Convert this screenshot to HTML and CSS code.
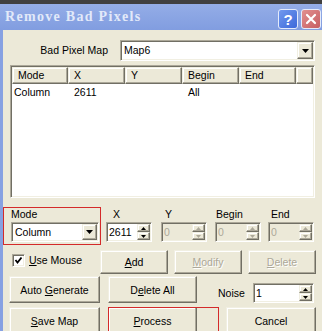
FILE: index.html
```html
<!DOCTYPE html>
<html lang="en">
<head>
    <meta charset="UTF-8">
    <title>Remove Bad Pixels</title>
    <link rel="stylesheet" href="styles.css">
</head>
<body>
    <div class="top-edge"></div>
    <div class="titlebar">
        <span class="title">Remove Bad Pixels</span>
        <div class="caption-btns">
            <span class="cap-btn cap-help">?</span>
            <span class="cap-btn cap-close">
                <svg width="12" height="12" viewBox="0 0 12 12"><path d="M2 2 L10 10 M10 2 L2 10" stroke="#fff" stroke-width="2.2" stroke-linecap="round"/></svg>
            </span>
        </div>
    </div>

    <div class="window">
        <div class="map-row">
            <span class="map-label">Bad Pixel Map</span>
            <div class="combo map-combo">
                <span class="combo-text">Map6</span>
                <span class="drop"><svg width="7" height="4" viewBox="0 0 7 4"><polygon points="0,0 7,0 3.5,4" fill="#000"/></svg></span>
            </div>
        </div>

        <div class="listview">
            <div class="lv-header">
                <span class="lv-col col-mode">Mode</span>
                <span class="lv-col col-x">X</span>
                <span class="lv-col col-y">Y</span>
                <span class="lv-col col-begin">Begin</span>
                <span class="lv-col col-end">End</span>
                <span class="lv-col col-rest"></span>
            </div>
            <div class="lv-row">
                <span class="lv-cell col-mode first">Column</span>
                <span class="lv-cell col-x">2611</span>
                <span class="lv-cell col-y"></span>
                <span class="lv-cell col-begin">All</span>
                <span class="lv-cell col-end"></span>
            </div>
        </div>

        <div class="fields">
            <div class="field field-mode">
                <span class="field-label">Mode</span>
                <div class="combo mode-combo">
                    <span class="combo-text">Column</span>
                    <span class="drop"><svg width="7" height="4" viewBox="0 0 7 4"><polygon points="0,0 7,0 3.5,4" fill="#000"/></svg></span>
                </div>
            </div>
            <div class="field field-x">
                <span class="field-label">X</span>
                <div class="spin">
                    <span class="spin-text">2611</span>
                    <span class="spin-btns">
                        <span class="spin-btn"><svg width="5" height="3" viewBox="0 0 5 3"><polygon points="0,3 5,3 2.5,0" fill="#000"/></svg></span>
                        <span class="spin-btn"><svg width="5" height="3" viewBox="0 0 5 3"><polygon points="0,0 5,0 2.5,3" fill="#000"/></svg></span>
                    </span>
                </div>
            </div>
            <div class="field field-y">
                <span class="field-label">Y</span>
                <div class="spin disabled">
                    <span class="spin-text">0</span>
                    <span class="spin-btns">
                        <span class="spin-btn"><svg width="5" height="3" viewBox="0 0 5 3"><polygon points="0,3 5,3 2.5,0" fill="#aca899"/></svg></span>
                        <span class="spin-btn"><svg width="5" height="3" viewBox="0 0 5 3"><polygon points="0,0 5,0 2.5,3" fill="#aca899"/></svg></span>
                    </span>
                </div>
            </div>
            <div class="field field-begin">
                <span class="field-label">Begin</span>
                <div class="spin disabled">
                    <span class="spin-text">0</span>
                    <span class="spin-btns">
                        <span class="spin-btn"><svg width="5" height="3" viewBox="0 0 5 3"><polygon points="0,3 5,3 2.5,0" fill="#aca899"/></svg></span>
                        <span class="spin-btn"><svg width="5" height="3" viewBox="0 0 5 3"><polygon points="0,0 5,0 2.5,3" fill="#aca899"/></svg></span>
                    </span>
                </div>
            </div>
            <div class="field field-end">
                <span class="field-label">End</span>
                <div class="spin disabled">
                    <span class="spin-text">0</span>
                    <span class="spin-btns">
                        <span class="spin-btn"><svg width="5" height="3" viewBox="0 0 5 3"><polygon points="0,3 5,3 2.5,0" fill="#aca899"/></svg></span>
                        <span class="spin-btn"><svg width="5" height="3" viewBox="0 0 5 3"><polygon points="0,0 5,0 2.5,3" fill="#aca899"/></svg></span>
                    </span>
                </div>
            </div>
        </div>

        <div class="btn-row row-edit">
            <label class="check">
                <span class="check-box"><svg width="9" height="9" viewBox="0 0 9 9"><polyline points="1.5,4 3.5,6.5 7.5,1.5" fill="none" stroke="#000" stroke-width="1.8"/></svg></span>
                <span><u>U</u>se Mouse</span>
            </label>
            <button class="btn btn-add"><u>A</u>dd</button>
            <button class="btn btn-modify" disabled><u>M</u>odify</button>
            <button class="btn btn-delete" disabled><u>D</u>elete</button>
        </div>

        <div class="btn-row row-gen">
            <button class="btn btn-left">Auto <u>G</u>enerate</button>
            <button class="btn btn-mid">D<u>e</u>lete All</button>
            <span class="noise-label">Noise</span>
            <div class="spin noise-spin">
                <span class="spin-text">1</span>
                <span class="spin-btns">
                    <span class="spin-btn"><svg width="5" height="3" viewBox="0 0 5 3"><polygon points="0,3 5,3 2.5,0" fill="#000"/></svg></span>
                    <span class="spin-btn"><svg width="5" height="3" viewBox="0 0 5 3"><polygon points="0,0 5,0 2.5,3" fill="#000"/></svg></span>
                </span>
            </div>
        </div>

        <div class="btn-row row-main">
            <button class="btn btn-left"><u>S</u>ave Map</button>
            <div class="marked">
                <button class="btn btn-process"><u>P</u>rocess</button>
            </div>
            <button class="btn btn-cancel">Cancel</button>
        </div>
    </div>
</body>
</html>
```

FILE: styles.css
```css
body {
    margin: 0;
    width: 322px;
    height: 331px;
    overflow: hidden;
    background-color: #ece9d8;
    font-family: "Liberation Sans", Arial, sans-serif;
    font-size: 10.5px;
    color: #000;
}
.top-edge {
    height: 4px;
    background-color: #404040;
}
.titlebar {
    height: 26px;
    display: flex;
    justify-content: space-between;
    align-items: flex-start;
    background: linear-gradient(#94ade7, #819de0);
}
.title {
    font-family: "Liberation Serif", serif;
    font-weight: bold;
    font-size: 14px;
    letter-spacing: 1.3px;
    color: #e2e9f9;
    line-height: 26px;
    padding-left: 5px;
}
.caption-btns {
    display: flex;
    gap: 3px;
    padding: 5px 1px 0 0;
}
.cap-btn {
    width: 20px;
    height: 20px;
    box-sizing: border-box;
    border: 1px solid #e4ebfb;
    border-radius: 3px;
    display: flex;
    align-items: center;
    justify-content: center;
}
.cap-help {
    background: linear-gradient(135deg, #7199ee, #3d69da);
    color: #fff;
    font-weight: bold;
    font-size: 15px;
}
.cap-close {
    background: linear-gradient(135deg, #e29090, #c65e62);
}
.window {
    border-left: 3px solid #87a1e2;
    height: 301px;
    padding-top: 10px;
    box-sizing: border-box;
}

/* sunken / raised 3d borders */
.combo, .spin, .listview, .check-box {
    border: 1px solid;
    border-color: #aca899 #fff #fff #aca899;
    box-shadow: inset 1px 1px #716f64, inset -1px -1px #f1efe2;
    box-sizing: border-box;
    padding: 1px;
    background-color: #fff;
}
.drop, .spin-btn, .lv-col, .btn {
    border: 1px solid;
    border-color: #f1efe2 #716f64 #716f64 #f1efe2;
    box-shadow: inset -1px -1px #aca899, inset 1px 1px #fff;
    box-sizing: border-box;
    background-color: #ece9d8;
}

.map-row {
    display: flex;
    height: 21px;
}
.map-label {
    width: 105px;
    margin-right: 12px;
    text-align: right;
    line-height: 21px;
}
.combo {
    display: flex;
    height: 21px;
}
.map-combo {
    width: 195px;
}
.combo-text {
    flex: 1;
    padding-left: 2px;
    line-height: 17px;
}
.drop {
    width: 16px;
    display: flex;
    align-items: center;
    justify-content: center;
}

.listview {
    margin: 4px 0 0 7px;
    width: 305px;
    height: 133px;
}
.lv-header, .lv-row {
    display: flex;
}
.lv-col {
    height: 17px;
    line-height: 15px;
    padding-left: 5px;
}
.lv-row {
    height: 14px;
    line-height: 14px;
    margin-top: 1px;
}
.lv-cell {
    padding-left: 6px;
    box-sizing: border-box;
}
.lv-cell.first {
    padding-left: 2px;
}
.col-mode { width: 56px; }
.col-x, .col-y, .col-begin, .col-end { width: 57px; }
.col-rest { flex: 1; }

.fields {
    display: flex;
    align-items: flex-start;
    margin-top: 9px;
}
.field {
    display: flex;
    flex-direction: column;
    margin-top: 1px;
}
.field-label {
    height: 14px;
    line-height: 13px;
}
.field-mode {
    width: 98px;
    margin-top: 0;
    border: 1px solid #d42a2a;
    box-sizing: border-box;
    padding: 0 0 2px 7px;
}
.mode-combo {
    width: 88px;
    height: 20px;
}
.mode-combo .drop {
    width: 15px;
}
.mode-combo .combo-text {
    line-height: 16px;
}
.field-x { margin-left: 5px; }
.field-x .field-label { padding-left: 7px; }
.field-y { margin-left: 9px; }
.field-y .field-label { padding-left: 4px; }
.field-begin { margin-left: 8px; }
.field-begin .field-label { padding-left: 1px; }
.field-end { margin-left: 7px; }
.field-end .field-label { padding-left: 3px; }

.spin {
    display: flex;
    width: 46px;
    height: 20px;
}
.spin-text {
    flex: 1;
    padding-left: 1px;
    line-height: 16px;
}
.spin-btns {
    width: 13px;
    display: flex;
    flex-direction: column;
}
.spin-btn {
    flex: 1;
    display: flex;
    align-items: center;
    justify-content: center;
}
.spin.disabled {
    background-color: #ece9d8;
    color: #aca899;
}

.btn-row {
    display: flex;
    align-items: flex-start;
}
.row-edit {
    margin-top: 5px;
    height: 24px;
}
.row-gen {
    margin-top: 2px;
    height: 27px;
}
.row-main {
    margin-top: 4px;
    height: 27px;
}
.btn {
    font-family: inherit;
    font-size: 10.5px;
    color: #000;
    padding: 0;
    height: 100%;
}
.btn:disabled {
    color: #aca899;
    text-shadow: 1px 1px 0 #fff;
}
.check {
    width: 88px;
    margin-left: 9px;
    display: flex;
    align-items: center;
    gap: 4px;
    height: 24px;
    margin-top: -2px;
}
.check-box {
    width: 13px;
    height: 13px;
    padding: 0;
    display: flex;
    align-items: center;
    justify-content: center;
}
.btn-add { width: 68px; }
.btn-modify { width: 68px; margin-left: 6px; }
.btn-delete { width: 68px; margin-left: 6px; }
.btn-left { width: 91px; margin-left: 6px; }
.btn-mid { width: 89px; margin-left: 8px; }
.noise-label {
    margin-left: 21px;
    width: 35px;
    line-height: 20px;
    margin-top: 7px;
}
.noise-spin {
    width: 61px;
    margin-top: 7px;
}
.marked {
    position: relative;
    width: 111px;
    height: 100%;
    margin-left: 8px;
}
.marked::after {
    content: "";
    position: absolute;
    inset: 0;
    border: 1px solid #d42a2a;
    pointer-events: none;
}
.btn-process { width: 89px; }
.btn-cancel { width: 90px; margin-left: 7px; }
```
